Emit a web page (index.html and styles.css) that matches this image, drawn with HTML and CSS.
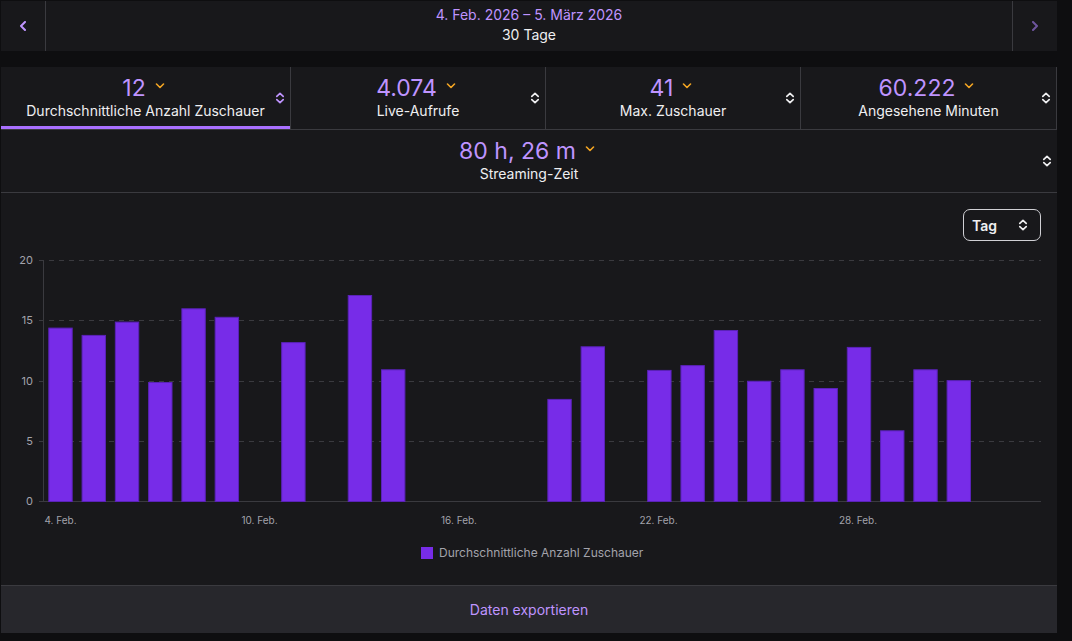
FILE: index.html
```html
<!DOCTYPE html>
<html lang="de">
<head>
<meta charset="utf-8">
<title>Statistiken</title>
<link rel="stylesheet" href="styles.css">
</head>
<body>
<div class="page">
  <div class="datebar">
    <button class="nav nav-prev" aria-label="Zurück">
      <svg width="8" height="10" viewBox="0 0 8 10"><path d="M6 1 L2 5 L6 9" fill="none" stroke="currentColor" stroke-width="2" stroke-linecap="round" stroke-linejoin="round"/></svg>
    </button>
    <div class="range">
      <div class="range-dates">4. Feb. 2026 – 5. März 2026</div>
      <div class="range-days">30 Tage</div>
    </div>
    <button class="nav nav-next" aria-label="Weiter">
      <svg width="8" height="10" viewBox="0 0 8 10"><path d="M2 1 L6 5 L2 9" fill="none" stroke="currentColor" stroke-width="2" stroke-linecap="round" stroke-linejoin="round"/></svg>
    </button>
  </div>

  <div class="panel">
    <div class="tabs">
      <div class="tab active">
        <div class="tab-body">
          <div class="tab-value"><span>12</span><svg class="chev" width="10" height="6" viewBox="0 0 10 6"><path d="M1.5 1 L5 4.5 L8.5 1" fill="none" stroke="currentColor" stroke-width="1.6" stroke-linecap="round" stroke-linejoin="round"/></svg></div>
          <div class="tab-label">Durchschnittliche Anzahl Zuschauer</div>
        </div>
        <svg class="sort" width="10" height="12" viewBox="0 0 10 12"><path d="M1.8 4.4 L5 1.4 L8.2 4.4 M1.8 7.6 L5 10.6 L8.2 7.6" fill="none" stroke="currentColor" stroke-width="1.7" stroke-linecap="round" stroke-linejoin="round"/></svg>
      </div>
      <div class="tab">
        <div class="tab-body">
          <div class="tab-value"><span>4.074</span><svg class="chev" width="10" height="6" viewBox="0 0 10 6"><path d="M1.5 1 L5 4.5 L8.5 1" fill="none" stroke="currentColor" stroke-width="1.6" stroke-linecap="round" stroke-linejoin="round"/></svg></div>
          <div class="tab-label">Live-Aufrufe</div>
        </div>
        <svg class="sort" width="10" height="12" viewBox="0 0 10 12"><path d="M1.8 4.4 L5 1.4 L8.2 4.4 M1.8 7.6 L5 10.6 L8.2 7.6" fill="none" stroke="currentColor" stroke-width="1.7" stroke-linecap="round" stroke-linejoin="round"/></svg>
      </div>
      <div class="tab">
        <div class="tab-body">
          <div class="tab-value"><span>41</span><svg class="chev" width="10" height="6" viewBox="0 0 10 6"><path d="M1.5 1 L5 4.5 L8.5 1" fill="none" stroke="currentColor" stroke-width="1.6" stroke-linecap="round" stroke-linejoin="round"/></svg></div>
          <div class="tab-label">Max. Zuschauer</div>
        </div>
        <svg class="sort" width="10" height="12" viewBox="0 0 10 12"><path d="M1.8 4.4 L5 1.4 L8.2 4.4 M1.8 7.6 L5 10.6 L8.2 7.6" fill="none" stroke="currentColor" stroke-width="1.7" stroke-linecap="round" stroke-linejoin="round"/></svg>
      </div>
      <div class="tab">
        <div class="tab-body">
          <div class="tab-value"><span>60.222</span><svg class="chev" width="10" height="6" viewBox="0 0 10 6"><path d="M1.5 1 L5 4.5 L8.5 1" fill="none" stroke="currentColor" stroke-width="1.6" stroke-linecap="round" stroke-linejoin="round"/></svg></div>
          <div class="tab-label">Angesehene Minuten</div>
        </div>
        <svg class="sort" width="10" height="12" viewBox="0 0 10 12"><path d="M1.8 4.4 L5 1.4 L8.2 4.4 M1.8 7.6 L5 10.6 L8.2 7.6" fill="none" stroke="currentColor" stroke-width="1.7" stroke-linecap="round" stroke-linejoin="round"/></svg>
      </div>
    </div>

    <div class="tab tab-wide">
      <div class="tab-body">
        <div class="tab-value"><span>80 h, 26 m</span><svg class="chev" width="10" height="6" viewBox="0 0 10 6"><path d="M1.5 1 L5 4.5 L8.5 1" fill="none" stroke="currentColor" stroke-width="1.6" stroke-linecap="round" stroke-linejoin="round"/></svg></div>
        <div class="tab-label">Streaming-Zeit</div>
      </div>
      <svg class="sort" width="10" height="12" viewBox="0 0 10 12"><path d="M1.8 4.4 L5 1.4 L8.2 4.4 M1.8 7.6 L5 10.6 L8.2 7.6" fill="none" stroke="currentColor" stroke-width="1.7" stroke-linecap="round" stroke-linejoin="round"/></svg>
    </div>

    <div class="chart">
      <div class="chart-top">
        <div class="select">
          <span>Tag</span>
          <svg width="10" height="12" viewBox="0 0 10 12"><path d="M1.8 4.4 L5 1.4 L8.2 4.4 M1.8 7.6 L5 10.6 L8.2 7.6" fill="none" stroke="currentColor" stroke-width="1.7" stroke-linecap="round" stroke-linejoin="round"/></svg>
        </div>
      </div>
      <svg class="plot" width="1056" height="344" viewBox="1 241 1056 344">
        <g class="grid">
          <line x1="39" y1="260.5" x2="1041" y2="260.5"/>
          <line x1="39" y1="320.5" x2="1041" y2="320.5"/>
          <line x1="39" y1="381.5" x2="1041" y2="381.5"/>
          <line x1="39" y1="441.5" x2="1041" y2="441.5"/>
        </g>
        <g class="axis">
          <line x1="43.5" y1="260" x2="43.5" y2="502"/>
          <line x1="39" y1="501.5" x2="1041" y2="501.5"/>
        </g>
        <g class="ylabels">
          <text x="33" y="264">20</text>
          <text x="33" y="324">15</text>
          <text x="33" y="385">10</text>
          <text x="33" y="445">5</text>
          <text x="33" y="505">0</text>
        </g>
        <g class="bars">
          <rect x="48.8" y="328.1" width="23.4" height="173.4"/>
          <rect x="82.07" y="335.4" width="23.4" height="166.1"/>
          <rect x="115.34" y="322.1" width="23.4" height="179.4"/>
          <rect x="148.61" y="382.5" width="23.4" height="119"/>
          <rect x="181.88" y="308.8" width="23.4" height="192.7"/>
          <rect x="215.15" y="317.3" width="23.4" height="184.2"/>
          <rect x="281.69" y="342.6" width="23.4" height="158.9"/>
          <rect x="348.23" y="295.5" width="23.4" height="206"/>
          <rect x="381.5" y="369.8" width="23.4" height="131.7"/>
          <rect x="547.85" y="399.4" width="23.4" height="102.1"/>
          <rect x="581.12" y="346.8" width="23.4" height="154.7"/>
          <rect x="647.66" y="370.4" width="23.4" height="131.1"/>
          <rect x="680.93" y="365.6" width="23.4" height="135.9"/>
          <rect x="714.2" y="330.5" width="23.4" height="171"/>
          <rect x="747.47" y="381.25" width="23.4" height="120.25"/>
          <rect x="780.74" y="369.8" width="23.4" height="131.7"/>
          <rect x="814.01" y="388.5" width="23.4" height="113"/>
          <rect x="847.28" y="347.4" width="23.4" height="154.1"/>
          <rect x="880.55" y="430.8" width="23.4" height="70.7"/>
          <rect x="913.82" y="369.8" width="23.4" height="131.7"/>
          <rect x="947.09" y="380.6" width="23.4" height="120.9"/>
        </g>
        <g class="xlabels">
          <text x="60.5" y="524">4. Feb.</text>
          <text x="259.5" y="524">10. Feb.</text>
          <text x="459" y="524">16. Feb.</text>
          <text x="658.5" y="524">22. Feb.</text>
          <text x="858" y="524">28. Feb.</text>
        </g>
        <g class="legend">
          <rect x="421" y="547" width="12" height="12"/>
          <text x="439" y="557">Durchschnittliche Anzahl Zuschauer</text>
        </g>
      </svg>
    </div>

    <div class="footer">Daten exportieren</div>
  </div>
</div>
</body>
</html>
```

FILE: styles.css
```css
* {
  box-sizing: border-box;
}

html,
body {
  margin: 0;
  padding: 0;
  background: #0e0e10;
}

body {
  font-family: Inter, "Noto Sans", "Liberation Sans", sans-serif;
  color: #efeff1;
  font-size: 14px;
}

.page {
  padding: 1px 0 0 1px;
  width: 1057px;
}

.datebar {
  display: grid;
  grid-template-columns: 45px 1fr 45px;
  height: 50px;
  width: 1056px;
  background: #18181b;
}

.nav {
  display: flex;
  align-items: center;
  justify-content: center;
  border: 0;
  margin: 0;
  padding: 0;
  background: transparent;
  height: 50px;
}

.nav-prev {
  border-right: 1px solid #3a3a3f;
  color: #bf94ff;
}

.nav-next {
  border-left: 1px solid #3a3a3f;
  color: #6e559e;
}

.range {
  text-align: center;
  padding-top: 4px;
  line-height: 20px;
}

.range-dates {
  color: #bf94ff;
}

.range-days {
  color: #efeff1;
}

.panel {
  margin-top: 16px;
  width: 1056px;
  background: #18181b;
}

.tabs {
  display: grid;
  grid-template-columns: 290px 255px 255px 256px;
}

.tab {
  display: grid;
  grid-template-columns: 22px 1fr 22px;
  align-items: center;
  height: 63px;
  border-bottom: 1px solid #3a3a3f;
  border-right: 1px solid #3a3a3f;
}

.tabs .tab.active {
  box-shadow: inset 0 -3px 0 #a970ff;
}

.tab-wide {
  border-right: 0;
}

.tab-body {
  grid-column: 2;
  align-self: start;
  padding-top: 8px;
  text-align: center;
}

.tab-value {
  display: flex;
  justify-content: center;
  align-items: center;
  gap: 9px;
  font-size: 23px;
  line-height: 27px;
  color: #bf94ff;
  padding-right: 4px;
}

.chev {
  color: #f5a623;
  margin-top: -5px;
}

.tab-label {
  font-size: 14px;
  line-height: 18px;
  color: #efeff1;
}

.sort {
  grid-column: 3;
  justify-self: end;
  margin-right: 5px;
  color: #efeff1;
}

.tab.active .sort {
  color: #bf94ff;
}

.chart {
  padding-top: 16px;
}

.chart-top {
  display: flex;
  justify-content: flex-end;
  padding-right: 16px;
}

.select {
  display: flex;
  align-items: center;
  justify-content: space-between;
  width: 78px;
  height: 32px;
  padding: 0 12px 0 8px;
  border: 1px solid #d0d0d5;
  border-radius: 7px;
  font-weight: 600;
  font-size: 14px;
  color: #efeff1;
}

.plot {
  display: block;
}

.grid line {
  stroke: #3a3a3f;
  stroke-width: 1;
  stroke-dasharray: 5 5;
}

.axis line {
  stroke: #3a3a3f;
  stroke-width: 1;
}

.ylabels text {
  fill: #a3a3ab;
  font-size: 11px;
  text-anchor: end;
  font-family: Inter, "Liberation Sans", sans-serif;
}

.xlabels text {
  fill: #a3a3ab;
  font-size: 10px;
  text-anchor: middle;
  font-family: Inter, "Liberation Sans", sans-serif;
}

.bars rect {
  fill: #772ce8;
  stroke: #5a22b8;
  stroke-width: 1;
}

.legend rect {
  fill: #772ce8;
}

.legend text {
  fill: #a3a3ab;
  font-size: 12px;
  font-family: Inter, "Liberation Sans", sans-serif;
}

.footer {
  height: 48px;
  border-top: 1px solid #3a3a3f;
  background: #27272c;
  color: #bf94ff;
  text-align: center;
  line-height: 47px;
  font-size: 14px;
}
```
